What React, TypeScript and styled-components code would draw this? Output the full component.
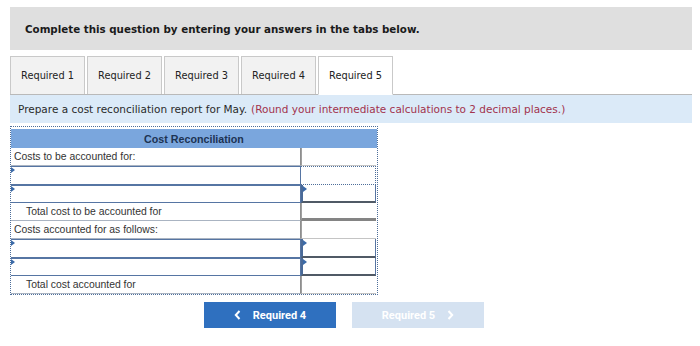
import styled, { createGlobalStyle } from "styled-components";

const GlobalStyle = createGlobalStyle`
    html, body {
        margin: 0;
        padding: 0;
        background: #ffffff;
    }
    body {
        font-family: "DejaVu Sans", Verdana, sans-serif;
        color: #222;
    }
`;

const Page = styled.div`
    width: 700px;
    height: 346px;
    padding-top: 7px;
    box-sizing: border-box;
`;

const Banner = styled.div`
    margin: 0 8px 0 10px;
    height: 43px;
    background-color: #dfdfdf;
    display: flex;
    align-items: center;
    padding-left: 15px;
    font-size: 10.3px;
    font-weight: 700;
    color: #1a1a1a;
`;

const TabStrip = styled.div`
    display: flex;
    gap: 2px;
    margin: 6px 0 0 10px;
    height: 38px;
    position: relative;
    z-index: 1;
`;

const Tab = styled.div<{ $active?: boolean }>`
    width: 75px;
    box-sizing: border-box;
    display: flex;
    align-items: center;
    justify-content: center;
    font-size: 9.8px;
    color: #222;
    border: 1px solid #c9c9c9;
    border-bottom: ${p => (p.$active ? "1px solid #ffffff" : "none")};
    background-color: ${p => (p.$active ? "#ffffff" : "#f2f2f2")};
    margin-bottom: ${p => (p.$active ? "-1px" : "0")};
    height: ${p => (p.$active ? "39px" : "38px")};
`;

const Prompt = styled.div`
    margin: 0 8px 0 10px;
    height: 29px;
    box-sizing: border-box;
    border-top: 1px solid #b9b9b9;
    background-color: #dbeaf8;
    display: flex;
    align-items: center;
    padding-left: 8px;
    font-size: 10.5px;
    color: #2a2a2a;
    white-space: nowrap;
`;

const Hint = styled.span`
    color: #a2334d;
    margin-left: 4px;
`;

const Sheet = styled.div`
    margin: 3px 0 0 10px;
    width: 368px;
    box-sizing: border-box;
    border: 1px dotted #4d6e9a;
    font-family: "Liberation Sans", Arial, sans-serif;
    font-size: 10.4px;
    color: #333;
`;

const SheetTitle = styled.div`
    height: 19px;
    margin-top: 2px;
    background-color: #7aa6dd;
    display: flex;
    align-items: center;
    justify-content: center;
    font-weight: 700;
    font-size: 10.7px;
    color: #1d3352;
`;

const Row = styled.div`
    display: grid;
    grid-template-columns: 290px 1fr;
    height: 18.3px;
`;

type LabelKind = "text" | "indent" | "input";
type ValueKind = "plain" | "dotted" | "input" | "total";

const Label = styled.div<{ $kind: LabelKind }>`
    position: relative;
    box-sizing: border-box;
    display: flex;
    align-items: center;
    padding-left: ${p => (p.$kind === "indent" ? "15px" : "3px")};
    background: #fff;
    border-bottom: 1px solid ${p => (p.$kind === "input" ? "#5675a3" : "#aab4c2")};
    border-top: ${p => (p.$kind === "input" ? "1px solid #5675a3" : "none")};
    border-right: 1px solid ${p => (p.$kind === "input" ? "#5675a3" : "#8e8e8e")};

    ${p =>
        p.$kind === "input" &&
        `
        &::before {
            content: "";
            position: absolute;
            left: 0;
            top: 0;
            border-top: 3px solid transparent;
            border-bottom: 3px solid transparent;
            border-left: 4px solid #3b6aa8;
        }
    `}
`;

const Value = styled.div<{ $kind: ValueKind }>`
    position: relative;
    box-sizing: border-box;
    background: #fff;
    margin-right: 1px;
    ${p => {
        switch (p.$kind) {
            case "dotted":
                return `border: 1px dotted #4d6e9a; border-left: none;`;
            case "input":
                return `
                    border-left: 2px solid #4a6a98;
                    border-bottom: 2px solid #505a66;
                    border-right: 1px solid #5675a3;
                    &::before {
                        content: "";
                        position: absolute;
                        left: 0;
                        top: 1px;
                        border-top: 3px solid transparent;
                        border-bottom: 3px solid transparent;
                        border-left: 4px solid #3b6aa8;
                    }
                `;
            case "total":
                return `border-left: 1px solid #a0a0a0; border-bottom: 3px solid #848484;`;
            default:
                return `border-left: 1px solid #a0a0a0; border-bottom: 1px solid #c4c4c4;`;
        }
    }}
`;

const Actions = styled.div`
    display: flex;
    gap: 16px;
    padding-left: 204px;
    margin-top: 7px;
`;

const NavButton = styled.div<{ $disabled?: boolean }>`
    width: 132px;
    height: 26px;
    display: flex;
    align-items: center;
    justify-content: center;
    gap: 12px;
    font-family: Roboto, "Liberation Sans", sans-serif;
    font-weight: 700;
    font-size: 11px;
    color: #ffffff;
    background-color: ${p => (p.$disabled ? "#d5e2f1" : "#2f70bf")};
`;

const Chevron = ({ dir }: { dir: "left" | "right" }) => (
    <svg width="7" height="10" viewBox="0 0 7 10">
        <path
            d={dir === "left" ? "M5.5 1 L1.8 5 L5.5 9" : "M1.5 1 L5.2 5 L1.5 9"}
            fill="none"
            stroke="currentColor"
            strokeWidth="2"
        />
    </svg>
);

const rows: { label: string; kind: LabelKind; value: ValueKind }[] = [
    { label: "Costs to be accounted for:", kind: "text", value: "plain" },
    { label: "", kind: "input", value: "dotted" },
    { label: "", kind: "input", value: "input" },
    { label: "Total cost to be accounted for", kind: "indent", value: "total" },
    { label: "Costs accounted for as follows:", kind: "text", value: "plain" },
    { label: "", kind: "input", value: "input" },
    { label: "", kind: "input", value: "input" },
    { label: "Total cost accounted for", kind: "indent", value: "plain" },
];

function App() {
    return (
        <Page>
            <GlobalStyle />
            <Banner>Complete this question by entering your answers in the tabs below.</Banner>
            <TabStrip>
                {[1, 2, 3, 4, 5].map(n => (
                    <Tab key={n} $active={n === 5}>
                        Required {n}
                    </Tab>
                ))}
            </TabStrip>
            <Prompt>
                Prepare a cost reconciliation report for May.
                <Hint>(Round your intermediate calculations to 2 decimal places.)</Hint>
            </Prompt>
            <Sheet>
                <SheetTitle>Cost Reconciliation</SheetTitle>
                {rows.map((r, i) => (
                    <Row key={i}>
                        <Label $kind={r.kind}>{r.label}</Label>
                        <Value $kind={r.value} />
                    </Row>
                ))}
            </Sheet>
            <Actions>
                <NavButton>
                    <Chevron dir="left" />
                    Required 4
                </NavButton>
                <NavButton $disabled>
                    Required 5
                    <Chevron dir="right" />
                </NavButton>
            </Actions>
        </Page>
    );
}

export default App;
